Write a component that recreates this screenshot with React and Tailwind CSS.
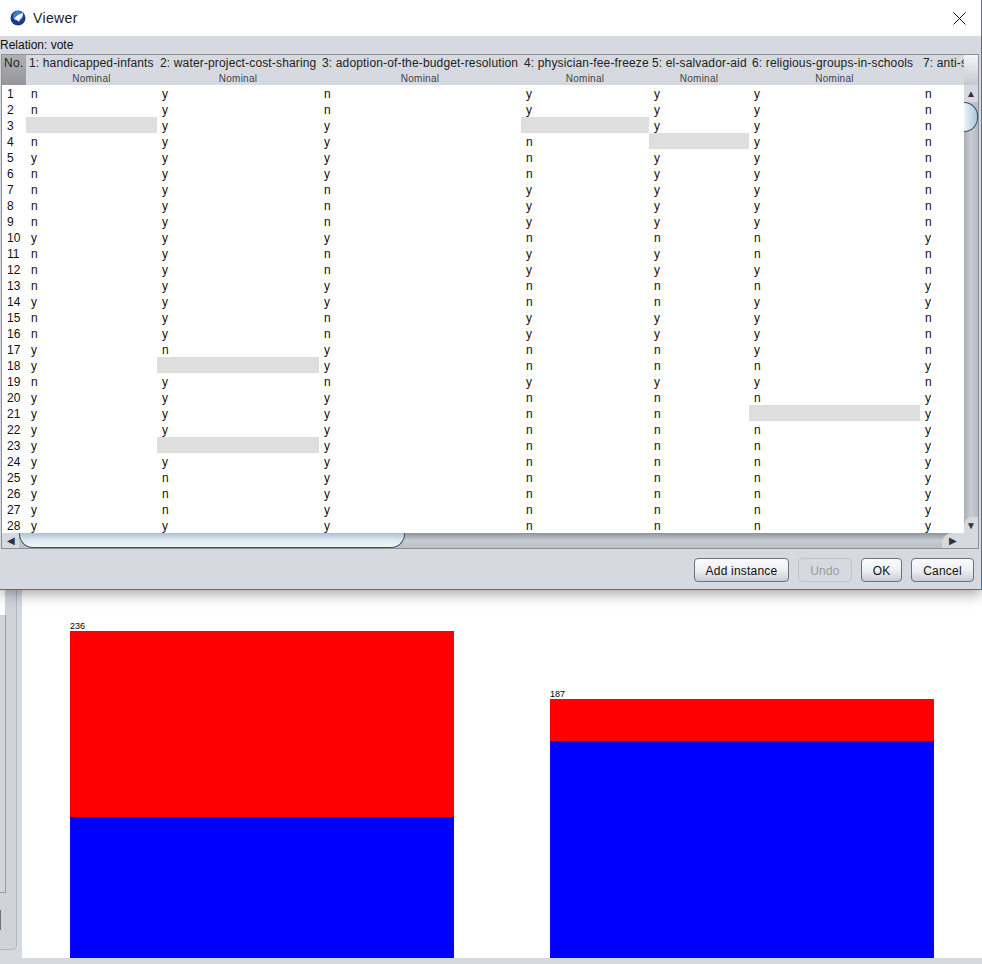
import React from 'react';

// one string per instance, "_" is a missing value
const ROWS = [
  'nynyyyn', 'nynyyyn', '_yy_yyn', 'nyyn_yn', 'yyynyyn', 'nyynyyn', 'nynyyyn',
  'nynyyyn', 'nynyyyn', 'yyynnny', 'nynyynn', 'nynyyyn', 'nyynnny', 'yyynnyy',
  'nynyyyn', 'nynyyyn', 'ynynnyn', 'y_ynnny', 'nynyyyn', 'yyynnny', 'yyynn_y',
  'yyynnny', 'y_ynnny', 'yyynnny', 'ynynnny', 'ynynnny', 'ynynnny', 'yyynnny',
];

const ATTRS = [
  '1: handicapped-infants',
  '2: water-project-cost-sharing',
  '3: adoption-of-the-budget-resolution',
  '4: physician-fee-freeze',
  '5: el-salvador-aid',
  '6: religious-groups-in-schools',
  '7: anti-satellite-test-ban',
];

const GRID = 'grid grid-cols-[24px_131px_162px_202px_128px_100px_171px_44px]';

function AppIcon() {
  return (
    <svg width="16" height="16" viewBox="0 0 16 16">
      <circle cx="8" cy="8" r="7.5" fill="#1c3a8a" />
      <circle cx="8" cy="6" r="5" fill="#3f7fd6" />
      <path d="M4 9 C6 6 9 4 13 3 C13 6 12 8 10 9 L9 12 L7 10 Z" fill="#ffffff" />
    </svg>
  );
}

function Btn({ children, w, disabled }) {
  return (
    <button
      className={`h-[24px] ${w} pt-px rounded-[4px] border text-[12px] tracking-[0.2px] ${
        disabled
          ? 'border-[#c0c3ca] text-[#9a9da4] bg-[#d6d9e0]'
          : 'border-[#6e7176] text-[#111] bg-gradient-to-b from-[#fbfbfd] via-[#eef0f4] to-[#c9ccd6]'
      }`}
    >
      {children}
    </button>
  );
}

function Bar({ label, red, blue }) {
  return (
    <div className="w-[384px] flex flex-col">
      <div className="h-[9px] leading-[9px] text-[9px] text-black">{label}</div>
      <div className={`${red} bg-[#ff0000]`} />
      <div className={`${blue} bg-[#0000ff]`} />
    </div>
  );
}

export default function App() {
  return (
    <div className="w-[982px] h-[964px] overflow-hidden flex flex-col bg-[#d6d9e0] font-['Liberation_Sans',Arial,sans-serif]">
      {/* Viewer dialog */}
      <div className="relative z-10 h-[590px] shrink-0 flex flex-col bg-[#d6d9e0] border-r border-b border-[#2b7cc0] shadow-[0_3px_14px_rgba(0,0,0,0.4)]">
        <div className="h-[36px] shrink-0 bg-white flex items-center pl-[10px] pr-[15px]">
          <AppIcon />
          <span className="ml-[7px] text-[14px] tracking-[0.35px] text-[#222]">Viewer</span>
          <svg className="ml-auto" width="13" height="13" viewBox="0 0 13 13">
            <path d="M0.5 0.5 L12.5 12.5 M12.5 0.5 L0.5 12.5" stroke="#111" strokeWidth="1" fill="none" />
          </svg>
        </div>

        <div className="h-[18px] shrink-0 leading-[19px] text-[12px] text-[#111]">Relation: vote</div>

        {/* table frame */}
        <div className="ml-[1px] w-[978px] h-[495px] shrink-0 border-t border-l border-r border-b border-[#8d9096] flex flex-col">
          <div className="h-[30px] shrink-0 flex">
            <div className={`${GRID} w-[962px] overflow-hidden`}>
              <div className="bg-gradient-to-b from-[#b0b0b4] to-[#96969a] text-[12px] tracking-[0.3px] text-[#222] leading-[17px] pl-[2px] whitespace-nowrap">
                No.
              </div>
              {ATTRS.map((a) => (
                <div key={a} className="min-w-0 overflow-hidden flex flex-col text-[#222]">
                  <div className="pl-[3px] h-[17px] leading-[17px] text-[12px] tracking-[0.15px] whitespace-nowrap">{a}</div>
                  <div className="h-[13px] leading-[13px] text-[10px] tracking-[0.25px] text-center text-[#444] whitespace-nowrap">
                    {a.startsWith('7') ? '' : 'Nominal'}
                  </div>
                </div>
              ))}
            </div>
            <div className="w-[14px] bg-gradient-to-b from-[#f4f5f7] to-[#c5c8cf]" />
          </div>

          <div className="h-[448px] shrink-0 flex">
            <div className="w-[962px] overflow-hidden bg-white">
              {ROWS.map((row, i) => (
                <div key={i} className={`${GRID} h-[16px] text-[12px] leading-[18px] text-[#111]`}>
                  <div className="pl-[5px] whitespace-nowrap">{i + 1}</div>
                  {row.split('').map((v, j) => (
                    <div key={j} className={`h-[16px] pl-[5px] ${v === '_' ? 'bg-[#dedede]' : ''}`}>
                      {v === '_' ? '' : v}
                    </div>
                  ))}
                </div>
              ))}
            </div>

            {/* vertical scrollbar */}
            <div className="w-[14px] flex flex-col bg-gradient-to-r from-[#a9acb2] via-[#c9ccd2] to-[#b6b9bf]">
              <div className="h-[17px] shrink-0 bg-[#d6d9e0] flex items-center justify-center text-[10px] text-[#333]">▲</div>
              <div className="h-[30px] w-[14px] shrink-0 rounded-r-[14px] border-r border-t border-b border-[#3b5068] bg-gradient-to-r from-[#eef4f9] to-[#a9c6de]" />
              <div className="grow" />
              <div className="h-[16px] shrink-0 rounded-tl-[8px] bg-[#d6d9e0] flex items-center justify-center text-[10px] text-[#333]">▼</div>
            </div>
          </div>

          {/* horizontal scrollbar */}
          <div className="h-[15px] shrink-0 flex">
            <div className="w-[962px] flex bg-gradient-to-b from-[#8f9298] via-[#c8cbd1] to-[#bcbfc6]">
              <div className="w-[17px] shrink-0 bg-[#d6d9e0] flex items-center justify-center text-[10px] text-[#333]">◀</div>
              <div className="w-[386px] shrink-0 rounded-b-[14px] border-l border-r border-b border-[#3b5068] bg-gradient-to-b from-[#a9c0d6] via-[#dfe9f2] to-[#f0f4f8]" />
              <div className="grow" />
              <div className="w-[22px] shrink-0 rounded-tl-[10px] bg-[#d6d9e0] flex items-center justify-center text-[10px] text-[#333]">▶</div>
            </div>
            <div className="w-[14px] bg-[#d6d9e0]" />
          </div>
        </div>

        <div className="mt-[9px] pr-[7px] flex justify-end gap-[9px]">
          <Btn w="w-[95px]">Add instance</Btn>
          <Btn w="w-[54px]" disabled>Undo</Btn>
          <Btn w="w-[41px]">OK</Btn>
          <Btn w="w-[63px]">Cancel</Btn>
        </div>
      </div>

      {/* window behind the dialog */}
      <div className="flex h-[368px] shrink-0">
        <div className="w-[22px] shrink-0">
          <div className="w-[17px] h-[360px] flex flex-col rounded-br-[5px] border-r border-b border-[#b4b7bd] bg-[#d0d3d9]">
            <div className="w-[5px] h-[25px] bg-white" />
            <div className="w-[6px] h-[278px] border-r border-b border-[#9a9da3]" />
            <div className="w-[1px] h-[20px] mt-[17px] bg-[#6f7277]" />
          </div>
        </div>
        <div className="grow bg-white pl-[48px] flex items-end gap-[96px]">
          <Bar label="236" red="h-[186px]" blue="h-[141px]" />
          <Bar label="187" red="h-[42px]" blue="h-[217px]" />
        </div>
      </div>
    </div>
  );
}
